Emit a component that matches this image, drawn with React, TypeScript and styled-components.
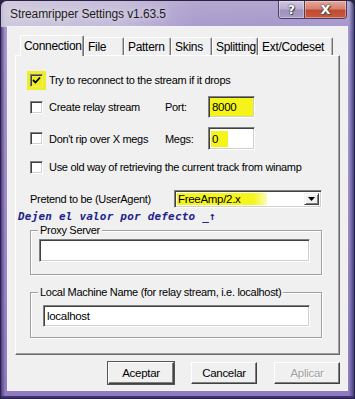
import React from "react";
import styled, { createGlobalStyle } from "styled-components";

const Global = createGlobalStyle`
  html, body { margin: 0; padding: 0; background: #2a2540; }
  body { width: 355px; height: 399px; overflow: hidden; }
  * { box-sizing: border-box; }
`;

const Window = styled.div`
  width: 355px;
  height: 399px;
  display: flex;
  flex-direction: column;
  border: 1px solid #2a2146;
  border-radius: 7px 7px 0 0;
  background:
    linear-gradient(90deg, rgba(70, 50, 120, 0.85) 0px, rgba(70, 50, 120, 0) 4px, rgba(40, 50, 110, 0) calc(100% - 5px), rgba(40, 50, 110, 0.8) 100%),
    linear-gradient(180deg, #b3a7cf 0px, #a596cb 30px, #9b89c6 60%, #8e7bbd 100%);
  box-shadow: inset 0 -2px 0 #3f2f74;
  font-family: "Liberation Sans", Arial, sans-serif;
  overflow: hidden;
`;

const TitleBar = styled.div`
  height: 26px;
  display: flex;
  align-items: flex-start;
  background: linear-gradient(90deg, rgba(214, 210, 224, 0.85) 0%, rgba(205, 198, 222, 0.7) 35%, rgba(180, 168, 214, 0.2) 55%, rgba(170, 155, 210, 0) 75%);
`;

const Title = styled.div`
  padding: 6px 0 0 9px;
  font-size: 12px;
  line-height: 15px;
  color: #1c1c1c;
  letter-spacing: -0.1px;
  text-shadow: 0 0 6px rgba(255, 255, 255, 0.9);
`;

const CaptionGroup = styled.div`
  margin-left: auto;
  margin-right: 7px;
  display: flex;
  height: 18px;
  border: 1px solid #4a3e68;
  border-top: none;
  border-radius: 0 0 4px 4px;
  overflow: hidden;
`;

const CaptionButton = styled.div<{ $close?: boolean }>`
  width: ${(p) => (p.$close ? 42 : 25)}px;
  height: 100%;
  display: flex;
  align-items: center;
  justify-content: center;
  font-family: "DejaVu Sans", sans-serif;
  font-weight: bold;
  font-size: ${(p) => (p.$close ? 13 : 12)}px;
  color: #fff;
  text-shadow: 0 0 1px #333, 0 0 2px #444, 1px 1px 0 #555;
  border-left: ${(p) => (p.$close ? "1px solid #5a3a4a" : "none")};
  background: ${(p) =>
    p.$close
      ? "linear-gradient(180deg, #e6a799 0%, #d7826f 45%, #c24a33 55%, #c8593f 100%)"
      : "linear-gradient(180deg, #cfc8de 0%, #b8aecf 45%, #9f92bd 55%, #a99cc6 100%)"};
  box-shadow: inset 0 0 0 1px rgba(255, 255, 255, 0.35);
`;

const Client = styled.div`
  flex: 1;
  margin: 0 7px 8px 7px;
  background: #f0f0f0;
  box-shadow: 0 0 0 1px #f6f2fc;
  display: flex;
  flex-direction: column;
  padding: 8px 7px 6px 7px;
  font-size: 11px;
  letter-spacing: -0.3px;
  color: #000;
`;

const TabStrip = styled.div`
  height: 20px;
  display: flex;
  align-items: flex-end;
  padding-left: 5px;
  position: relative;
  z-index: 1;
`;

const Tab = styled.div<{ $w: number; $active?: boolean }>`
  width: ${(p) => p.$w}px;
  height: ${(p) => (p.$active ? 21 : 18)}px;
  margin-bottom: ${(p) => (p.$active ? -1 : 0)}px;
  display: flex;
  align-items: center;
  padding-left: ${(p) => (p.$active ? 3 : 4)}px;
  padding-bottom: ${(p) => (p.$active ? 1 : 0)}px;
  background: #f0f0f0;
  border-top: 1px solid #fff;
  border-left: ${(p) => (p.$active ? "1px solid #fff" : "none")};
  border-right: 1px solid #6f6f6f;
  box-shadow: ${(p) => (p.$active ? "inset -1px 0 0 #a0a0a0" : "inset 1px 0 0 #fff, inset -1px 0 0 #b8b8b8")};
  border-radius: 2px 2px 0 0;
  font-size: 12px;
`;

const Panel = styled.div`
  height: 300px;
  border-top: 1px solid #fff;
  border-left: 1px solid #fff;
  border-right: 1px solid #696969;
  border-bottom: 1px solid #696969;
  box-shadow: inset -1px -1px 0 #a0a0a0;
  display: flex;
  flex-direction: column;
  padding: 14px 0 0 14px;
`;

const Row = styled.div<{ $h: number; $mt: number; $cols?: string }>`
  height: ${(p) => p.$h}px;
  margin-top: ${(p) => p.$mt}px;
  display: ${(p) => (p.$cols ? "grid" : "flex")};
  grid-template-columns: ${(p) => p.$cols || "none"};
  align-items: center;
`;

const CheckLabel = styled.div`
  display: flex;
  align-items: center;
  gap: 6px;
  white-space: nowrap;
`;

const CheckBox = styled.div<{ $mark?: boolean }>`
  width: 13px;
  height: 13px;
  flex: none;
  background: ${(p) => (p.$mark ? "#ecec2a" : "#fff")};
  border-top: 1px solid #808080;
  border-left: 1px solid #808080;
  border-right: 1px solid ${(p) => (p.$mark ? "#f0f060" : "#fff")};
  border-bottom: 1px solid ${(p) => (p.$mark ? "#f0f060" : "#fff")};
  box-shadow: inset 1px 1px 0 #404040 ${(p) => (p.$mark ? ", 0 0 0 3px #eded2a" : ", inset -1px -1px 0 #d4d0c8")};
  display: flex;
  align-items: center;
  justify-content: center;
`;

const Field = styled.div<{ $w: number; $h: number; $fill?: string }>`
  width: ${(p) => p.$w}px;
  height: ${(p) => p.$h}px;
  background: ${(p) => p.$fill || "#fff"};
  border-top: 1px solid #808080;
  border-left: 1px solid #808080;
  border-right: 1px solid #fff;
  border-bottom: 1px solid #fff;
  box-shadow: inset 1px 1px 0 #404040, inset -1px -1px 0 #d4d0c8;
  display: flex;
  align-items: center;
  padding-left: 3px;
  font-size: 11.5px;
`;

const Mark = styled.span`
  background: #f4f41a;
  padding: 2px 10px 2px 1px;
  margin-left: -1px;
`;

const ComboBox = styled.div`
  width: 148px;
  height: 18px;
  background: #fff;
  border-top: 1px solid #808080;
  border-left: 1px solid #808080;
  border-right: 1px solid #fff;
  border-bottom: 1px solid #fff;
  box-shadow: inset 1px 1px 0 #404040, inset -1px -1px 0 #d4d0c8;
  display: flex;
  align-items: stretch;
  padding: 2px;
  font-size: 11.5px;
`;

const ComboValue = styled.div`
  width: 90px;
  background: linear-gradient(90deg, #f5f51c 85%, rgba(245, 245, 28, 0.3) 100%);
  display: flex;
  align-items: center;
  padding-left: 1px;
`;

const ComboArrow = styled.div`
  margin-left: auto;
  width: 15px;
  background: #f0f0f0;
  border-top: 1px solid #f0f0f0;
  border-left: 1px solid #f0f0f0;
  border-right: 1px solid #404040;
  border-bottom: 1px solid #404040;
  box-shadow: inset 1px 1px 0 #fff, inset -1px -1px 0 #808080;
  display: flex;
  align-items: center;
  justify-content: center;
`;

const Note = styled.div`
  height: 14px;
  margin: 2px 0 0 -12px;
  font-family: "DejaVu Sans Mono", monospace;
  font-style: italic;
  font-weight: bold;
  font-size: 11px;
  letter-spacing: 0.2px;
  line-height: 14px;
  color: #23238a;
  white-space: nowrap;
`;

const GroupBox = styled.div<{ $mt: number; $pb: number }>`
  width: 292px;
  margin-top: ${(p) => p.$mt}px;
  border: 1px solid #a0a0a0;
  box-shadow: inset 1px 1px 0 #fff, 1px 1px 0 #fff;
  display: flex;
  flex-direction: column;
  padding: 0 11px ${(p) => p.$pb}px 8px;
`;

const GroupLabel = styled.div`
  align-self: flex-start;
  margin: -7px 0 0 -1px;
  padding: 0 2px;
  height: 13px;
  line-height: 13px;
  background: #f0f0f0;
  white-space: nowrap;
`;

const GroupField = styled(Field)<{ $ml: number; $mt: number }>`
  width: auto;
  margin-left: ${(p) => p.$ml}px;
  margin-top: ${(p) => p.$mt}px;
`;

const ButtonRow = styled.div`
  margin-top: 7px;
  display: flex;
  justify-content: flex-end;
  gap: 17px;
`;

const Button = styled.div<{ $default?: boolean; $disabled?: boolean }>`
  width: 66px;
  height: 22px;
  display: flex;
  align-items: center;
  justify-content: center;
  font-size: 11.5px;
  background: #f0f0f0;
  border-top: 1px solid #fff;
  border-left: 1px solid #fff;
  border-right: 1px solid #404040;
  border-bottom: 1px solid #404040;
  box-shadow: inset -1px -1px 0 #808080 ${(p) => (p.$default ? ", 0 0 0 1px #555" : "")};
  color: ${(p) => (p.$disabled ? "#a0a0a0" : "#000")};
  text-shadow: ${(p) => (p.$disabled ? "1px 1px 0 #fff" : "none")};
`;

const Check = () => (
  <svg width="9" height="9" viewBox="0 0 9 9">
    <path d="M1 4 L3.5 6.5 L8 1.5" fill="none" stroke="#000" strokeWidth="1.8" />
  </svg>
);

const Arrow = () => (
  <svg width="7" height="4" viewBox="0 0 7 4">
    <path d="M0 0 H7 L3.5 4 Z" fill="#000" />
  </svg>
);

const tabs: [string, number][] = [
  ["Connection", 64],
  ["File", 40],
  ["Pattern", 47],
  ["Skins", 41],
  ["Splitting", 46],
  ["Ext/Codeset", 75],
];

export default function App() {
  return (
    <>
      <Global />
      <Window>
        <TitleBar>
          <Title>Streamripper Settings v1.63.5</Title>
          <CaptionGroup>
            <CaptionButton>?</CaptionButton>
            <CaptionButton $close>X</CaptionButton>
          </CaptionGroup>
        </TitleBar>
        <Client>
          <TabStrip>
            {tabs.map(([t, w], i) => (
              <Tab key={t} $w={w} $active={i === 0}>
                {t}
              </Tab>
            ))}
          </TabStrip>
          <Panel>
            <Row $h={20} $mt={0}>
              <CheckLabel>
                <CheckBox $mark>
                  <Check />
                </CheckBox>
                Try to reconnect to the stream if it drops
              </CheckLabel>
            </Row>
            <Row $h={22} $mt={6} $cols="135px 43px 47px">
              <CheckLabel>
                <CheckBox />
                Create relay stream
              </CheckLabel>
              <span>Port:</span>
              <Field $w={47} $h={22} $fill="#f4f41a">8000</Field>
            </Row>
            <Row $h={22} $mt={9} $cols="135px 43px 47px">
              <CheckLabel>
                <CheckBox />
                Don't rip over X megs
              </CheckLabel>
              <span>Megs:</span>
              <Field $w={47} $h={23}>
                <Mark>0</Mark>
              </Field>
            </Row>
            <Row $h={20} $mt={8}>
              <CheckLabel>
                <CheckBox />
                Use old way of retrieving the current track from winamp
              </CheckLabel>
            </Row>
            <Row $h={18} $mt={13} $cols="144px 148px">
              <span>Pretend to be (UserAgent)</span>
              <ComboBox>
                <ComboValue>FreeAmp/2.x</ComboValue>
                <ComboArrow>
                  <Arrow />
                </ComboArrow>
              </ComboBox>
            </Row>
            <Note>Dejen el valor por defecto _↑</Note>
            <GroupBox $mt={6} $pb={12}>
              <GroupLabel>Proxy Server</GroupLabel>
              <GroupField $w={0} $h={23} $ml={0} $mt={2} />
            </GroupBox>
            <GroupBox $mt={17} $pb={10}>
              <GroupLabel>Local Machine Name (for relay stream, i.e. localhost)</GroupLabel>
              <GroupField $w={0} $h={22} $ml={4} $mt={6}>
                localhost
              </GroupField>
            </GroupBox>
          </Panel>
          <ButtonRow>
            <Button $default>Aceptar</Button>
            <Button>Cancelar</Button>
            <Button $disabled>Aplicar</Button>
          </ButtonRow>
        </Client>
      </Window>
    </>
  );
}
